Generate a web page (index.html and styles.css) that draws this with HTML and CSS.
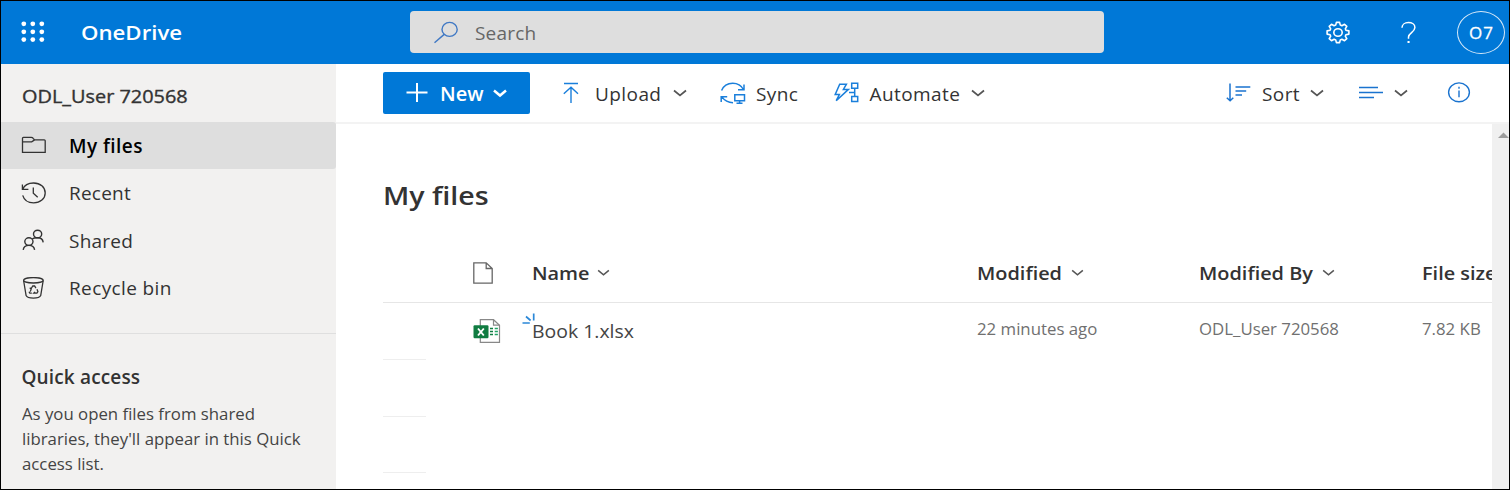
FILE: index.html
```html
<!DOCTYPE html>
<html lang="en">
<head>
<meta charset="utf-8">
<title>My files - OneDrive</title>
<link rel="stylesheet" href="styles.css">
</head>
<body>
<div class="app">
  <header class="suite">
    <svg class="waffle" width="24" height="22" viewBox="0 0 24 22" fill="#fff">
      <circle cx="2.8" cy="2.8" r="2.4"/><circle cx="11.8" cy="2.8" r="2.4"/><circle cx="20.8" cy="2.8" r="2.4"/>
      <circle cx="2.8" cy="10.8" r="2.4"/><circle cx="11.8" cy="10.8" r="2.4"/><circle cx="20.8" cy="10.8" r="2.4"/>
      <circle cx="2.8" cy="18.6" r="2.4"/><circle cx="11.8" cy="18.6" r="2.4"/><circle cx="20.8" cy="18.6" r="2.4"/>
    </svg>
    <span class="brand">OneDrive</span>
    <div class="search">
      <svg width="26" height="24" viewBox="0 0 26 24" fill="none" stroke="#3f78c4" stroke-width="1.4"><ellipse cx="16.6" cy="9.4" rx="7.6" ry="7"/><path d="M11.2 14.4 1.5 22.800"/></svg>
      <span class="search-text">Search</span>
    </div>
    <svg class="gear" width="26" height="24" viewBox="0 0 26 24" fill="none" stroke="#fff" stroke-width="1.6" stroke-linejoin="round">
      <path d="M10.700 4.100 11.400 1.400h3.200l.7 2.700 1.600.6 2.600-1.400 2.300 2.100-1.500 2.400.6 1.400 3 .7v3.200l-3 .7-.6 1.400 1.500 2.400-2.300 2.100-2.600-1.400-1.600.6-.7 2.700h-3.200l-.7-2.700-1.600-.6-2.600 1.400-2.300-2.100 1.500-2.400-.6-1.400-3-.7V9.900l3-.7.6-1.400-1.500-2.400 2.300-2.100 2.600 1.400z"/>
      <ellipse cx="13" cy="11.500" rx="4.200" ry="3.800"/>
    </svg>
    <svg class="help" width="18" height="24" viewBox="0 0 18 24" fill="none" stroke="#fff" stroke-width="1.5"><path d="M2 6.800C2 3.600 4.800 1.600 8.400 1.600s6.500 1.800 6.500 4.900c0 4.700-6.400 5.300-6.400 9.500v1.700"/><path d="M7.500 21h2.100" stroke-width="2"/></svg>
    <div class="avatar">O7</div>
  </header>

  <div class="body">
    <nav class="side">
      <div class="account"><span>ODL_User 720568</span></div>
      <a class="nav active">
        <svg width="26" height="22" viewBox="0 0 26 22" fill="none" stroke="#333" stroke-width="1.3"><path d="M1.500 17.300V3.200q0-.9.900-.9h7.800q1.300 0 2 1l1.300 1.600h9.800q.9 0 .9.900v11.500zM1.500 6.800h9.200l2.900-1.900"/></svg>
        <span>My files</span></a>
      <a class="nav">
        <svg width="26" height="22" viewBox="0 0 26 22" fill="none" stroke="#333" stroke-width="1.3"><path d="M1.700 7.300C3.200 3.600 7 1 12.600 1c6.700 0 11.600 4.300 11.600 10s-4.900 9.900-11.600 9.900C7.200 20.900 3.200 18.400 1.700 13.400M1.400 2.400v5h6M12.300 5.600v5.600l4.400 4"/></svg>
        <span>Recent</span></a>
      <a class="nav">
        <svg width="26" height="22" viewBox="0 0 26 22" fill="none" stroke="#333" stroke-width="1.4"><ellipse cx="16.600" cy="5" rx="4.100" ry="3.800"/><ellipse cx="7.900" cy="12.600" rx="4.100" ry="3.800"/><path d="M2.200 20.900c.4-2.900 2.600-4.500 5.700-4.500s5.300 1.600 5.700 4.500M11.200 10c1.200-.9 3-1.200 5.400-1.200 3.100 0 5.200 1.600 5.600 4.500"/></svg>
        <span>Shared</span></a>
      <a class="nav bin">
        <svg width="26" height="22" viewBox="0 0 26 22" fill="none" stroke="#333" stroke-width="1.3"><ellipse cx="12.400" cy="3.300" rx="9.800" ry="2.700"/><path d="m2.600 3.500 2.500 15c1.600 3.400 13 3.400 14.600 0l2.500-15"/><path d="m9.900 12 1.900-3h1.800l1.300 2.200M8.700 10.700l1.500 1.200-.9 2.700M10.800 16.100H8.800l-.8-1.400M16 12.200l.9 2.400-1 1.500h-3.100l1.200-1.200"/></svg>
        <span>Recycle bin</span></a>
      <section class="quick">
        <h2>Quick access</h2>
        <p>As you open files from shared<br>libraries, they'll appear in this Quick<br>access list.</p>
      </section>
    </nav>

    <main class="main">
      <div class="bar">
        <button class="new">
          <svg width="22" height="22" viewBox="0 0 22 22" stroke="#fff" stroke-width="2"><path d="M.5 10.500h21M11 1v19"/></svg>
          <span>New</span>
          <svg width="14" height="9" viewBox="0 0 14 9" fill="none" stroke="#fff" stroke-width="2.500"><path d="m1 1.500 6 5 6-5"/></svg>
        </button>
        <div class="cmd upload">
          <svg width="20" height="22" viewBox="0 0 20 22" fill="none" stroke="#1a7fdb" stroke-width="1.400"><path d="M3 1.500h14M10 21V5.200M2.800 11.700 10 5.200l7 6.500"/></svg>
          <span>Upload</span>
          <svg class="chev" width="14" height="9" viewBox="0 0 14 9"><path d="m1 1.500 6 5 6-5"/></svg>
        </div>
        <div class="cmd sync">
          <svg width="26" height="22" viewBox="0 0 26 22" fill="none" stroke="#1a7fdb" stroke-width="1.500"><path d="M1.600 8.500C3.400 4 7.400 1.200 12.700 1.200c4.600 0 8.700 2.400 10.700 6.300M24 2.600v5.200h-6M1.200 20v-5.300h6M1.700 14.900c2.600 3.300 6.200 5.600 11.300 5.900M14.800 12.700h9.700v6.100h-9.700zM19.600 19v2.300M16.500 21.200h6"/></svg>
          <span>Sync</span>
        </div>
        <div class="cmd auto">
          <svg width="26" height="22" viewBox="0 0 26 22" fill="none" stroke="#1a7fdb" stroke-width="1.500"><path d="M5.700 2.200h6.700l-3 5.200h5L2.200 18.700 5.400 12.500H1.200zM17.700 1.300h6v5h-6zM17.700 14.600h6v5h-6zM20.700 6.300v8.300M15 10.600h5.700"/></svg>
          <span>Automate</span>
          <svg class="chev" width="14" height="9" viewBox="0 0 14 9"><path d="m1 1.500 6 5 6-5"/></svg>
        </div>
        <div class="cmd sort">
          <svg width="26" height="22" viewBox="0 0 26 22" fill="none" stroke="#1a73cf" stroke-width="1.500"><path d="M4 1.500v17.300M.8 15.800l3.300 3 3.200-3M9.500 5h14.800M9.500 9h10.700M9.500 13h6.500"/></svg>
          <span>Sort</span>
          <svg class="chev" width="14" height="9" viewBox="0 0 14 9"><path d="m1 1.500 6 5 6-5"/></svg>
        </div>
        <div class="cmd view">
          <svg width="26" height="22" viewBox="0 0 26 22" fill="none" stroke="#1a73cf" stroke-width="1.600"><path d="M1 5.500h19M1 10.500h24M1 15.500h15"/></svg>
          <svg class="chev" width="14" height="9" viewBox="0 0 14 9"><path d="m1 1.500 6 5 6-5"/></svg>
        </div>
        <svg class="info" width="24" height="22" viewBox="0 0 24 22" fill="none" stroke="#1a73cf" stroke-width="1.400"><ellipse cx="12" cy="10.300" rx="10.400" ry="9.400"/><path d="M12 8.600v6.600M12 4.800v2"/></svg>
      </div>

      <div class="content">
        <div class="list">
          <h1><span>My files</span></h1>
          <div class="row head">
            <svg class="doc" width="20" height="22" viewBox="0 0 20 22" fill="none" stroke="#666" stroke-width="1.300"><path d="M.8.8h12.400L19.200 6.500v14.600H.8zM13.200.8v5.700h6"/></svg>
            <div class="c name"><span>Name</span><svg class="chev" width="13" height="8" viewBox="0 0 14 9"><path d="m1 1.500 6 5 6-5"/></svg></div>
            <div class="c mod"><span>Modified</span><svg class="chev" width="13" height="8" viewBox="0 0 14 9"><path d="m1 1.500 6 5 6-5"/></svg></div>
            <div class="c by"><span>Modified By</span><svg class="chev" width="13" height="8" viewBox="0 0 14 9"><path d="m1 1.500 6 5 6-5"/></svg></div>
            <div class="c size"><span>File size</span></div>
          </div>
          <div class="row item">
            <svg class="doc" width="28" height="26" viewBox="0 0 28 26"><path d="M7.300 1.700h13.200l6 5.500v17.100H7.300z" fill="#fff" stroke="#888" stroke-width="1.200"/><path d="M20.500 1.700v5.500h6" fill="none" stroke="#888" stroke-width="1.200"/><path d="M17 10.500h3M17 13.500h3M17 16.500h3" stroke="#107c41" stroke-width="1.500"/><path d="M21.700 10.500h3.200M21.700 13.500h3.200M21.700 16.500h3.200" stroke="#21a366" stroke-width="1.500"/><rect x=".5" y="7.300" width="15" height="13" rx="1.200" fill="#107c41"/><path d="m5 10.500 5.800 7M10.800 10.500 5 17.500" stroke="#fff" stroke-width="1.900"/></svg>
            <div class="c name"><span>Book 1.xlsx</span>
              <svg class="spark" width="14" height="12" viewBox="0 0 14 12" stroke="#2b88d8" stroke-width="1.700"><path d="M11.700.5v7M4 3.500l4.600 4M.5 10h7.300"/></svg></div>
            <div class="c mod"><span>22 minutes ago</span></div>
            <div class="c by"><span>ODL_User 720568</span></div>
            <div class="c size"><span>7.82 KB</span></div>
          </div>
          <div class="blank"></div>
          <div class="blank"></div>
          <div class="blank"></div>
        </div>
        <div class="scroll"><svg width="12" height="7" viewBox="0 0 12 7"><path d="M0 6 5.500.5 11 6z" fill="#9d9d9d"/></svg></div>
      </div>
    </main>
  </div>
</div>
</body>
</html>
```

FILE: styles.css
```css
* { box-sizing: border-box; margin: 0; padding: 0; }
body { font-family: "Open Sans", "Noto Sans", sans-serif; color: #333; background: #fff; overflow: hidden; }
svg { display: block; flex: none; }
span { white-space: nowrap; }
.app { width: 1510px; height: 490px; border: 1px solid #000; display: flex; flex-direction: column; overflow: hidden; }

.suite { flex: none; height: 63px; background: #0078d7; display: flex; align-items: center; color: #fff; }
.waffle { margin: 0 0 1px 20px; }
.brand { width: 329px; margin-left: 36px; padding-top: 1px; font-size: 20px; font-weight: 600; line-height: 26px; transform: scaleX(1.11); transform-origin: 0 50%; }
.search { width: 694px; height: 42px; margin-bottom: 1px; border-radius: 4px; background: #dedede; display: flex; align-items: center; padding-left: 23px; }
.search-text { padding-top: 1px; margin-left: 16px; font-size: 19px; color: #666; line-height: 26px; letter-spacing: .2px; }
.gear { margin-left: 221px; }
.help { margin-left: 49px; }
.avatar { flex: none; width: 48px; height: 43px; margin-left: 39px; border: 1px solid #d5e8f8; border-radius: 50%; font-size: 17px; line-height: 42px; letter-spacing: 1px; text-align: center; padding-left: 1px; -webkit-text-stroke: .3px #fff; }

.body { flex: 1; display: flex; min-height: 0; }
.side { flex: none; width: 335px; background: #f2f1f0; display: flex; flex-direction: column; }
.account { height: 58px; padding: 19px 0 0 20.5px; font-size: 18px; line-height: 26px; -webkit-text-stroke: .35px #333; }
.account span { display: inline-block; transform: scaleX(1.105); transform-origin: 0 50%; }
.nav { height: 47.3px; display: flex; align-items: center; padding-left: 20px; gap: 22px; font-size: 19px; line-height: 26px; letter-spacing: .22px; }
.nav span { padding-top: 1px; }
.active { background: #dedede; border-radius: 0 3px 3px 0; color: #000; font-weight: 600; letter-spacing: .45px; }
.bin { letter-spacing: .38px; }
.bin span { padding-top: 0; }
.quick { margin-top: 21.8px; border-top: 1px solid #dfdfdf; padding: 30px 0 0 20.5px; flex: 1; }
.quick h2 { font-size: 19px; font-weight: 600; line-height: 26px; letter-spacing: .15px; }
.quick p { width: 268px; margin-top: 12px; font-size: 16px; line-height: 25px; color: #444; white-space: nowrap; transform: scaleX(1.048); transform-origin: 0 50%; }

.main { flex: 1; min-width: 0; display: flex; flex-direction: column; }
.bar { flex: none; height: 60px; border-bottom: 2px solid #f3f3f3; display: flex; align-items: center; padding-left: 47px; font-size: 19px; }
.new { width: 147px; height: 42px; border: 0; border-radius: 2px; background: #0078d7; color: #fff; display: flex; align-items: center; padding-left: 23px; font: 600 20px/26px "Open Sans", "Noto Sans", sans-serif; }
.new span { width: 53px; margin-left: 12px; padding-top: 1px; text-align: left; }
.cmd { display: flex; align-items: center; line-height: 26px; flex: none; letter-spacing: .42px; }
.cmd span { padding-top: 1px; }
.chev { fill: none; stroke: #555; stroke-width: 1.7; }
.upload { width: 159px; margin-left: 31px; }
.upload span { margin-left: 14px; width: 78px; }
.sync { width: 114px; }
.sync span { margin-left: 10px; }
.auto { width: 392px; }
.auto span { margin-left: 9.5px; width: 101.5px; }
.sort { width: 132px; }
.sort span { margin-left: 10px; width: 48px; }
.view { width: 89px; }
.view .chev { margin-left: 10px; }

.content { flex: 1; min-height: 0; display: flex; }
.list { width: 1156px; padding-left: 47px; overflow: hidden; }
.list h1 { margin-top: 53px; font-size: 25.5px; font-weight: 600; line-height: 36px; }
.list h1 span { display: inline-block; transform: scaleX(1.12); transform-origin: 0 50%; }
.row { display: flex; width: 1109px; align-items: center; }
.head { height: 60px; margin-top: 30px; border-bottom: 1px solid #e6e6e6; font-size: 18.5px; font-weight: 600; line-height: 26px; }
.head span { transform: scaleX(1.075); transform-origin: 0 50%; }
.head .doc { margin: 0 38.5px 0 90px; }
.head .chev { margin-left: 8px; }
.head .name span { width: 57px; }
.head .mod span { width: 86px; }
.head .by span { width: 115px; }
.c { position: relative; flex: none; display: flex; align-items: center; }
.name { width: 445px; }
.mod { width: 222px; }
.by { width: 223px; }
.size { width: 80px; }
.item { height: 56px; font-size: 16px; line-height: 24px; color: #707070; }
.item .doc { margin: 0 30.5px 0 90px; }
.item span { transform: scaleX(1.05); transform-origin: 0 50%; }
.item .name { font-size: 18.5px; color: #444; }
.item .mod, .item .by, .item .size { padding-bottom: 4px; }
.spark { position: absolute; left: -10px; top: -6px; }
.blank { width: 43px; height: 56.5px; border-top: 1px solid #eee; }
.scroll { flex: 1; background: #f0f0f0; padding: 8px 0 0 6px; overflow: hidden; }
```
